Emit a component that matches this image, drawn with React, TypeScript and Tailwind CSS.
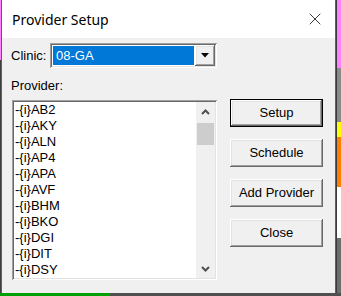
import { X } from "lucide-react";

const providers = ["AB2", "AKY", "ALN", "AP4", "APA", "AVF", "BHM", "BKO", "DGI", "DIT", "DSY"];

const WinButton = ({ label, isDefault = false }: { label: string; isDefault?: boolean }) => (
    <button
        className={
            isDefault
                ? "h-[28px] w-[93px] bg-[#f0f0f0] border border-black shadow-[inset_-1px_-1px_#696969,inset_1px_1px_#ffffff,inset_-2px_-2px_#a0a0a0,inset_2px_2px_#e3e3e3] text-[13px] text-black"
                : "h-[28px] w-[93px] bg-[#f0f0f0] shadow-[inset_-1px_-1px_#696969,inset_1px_1px_#ffffff,inset_-2px_-2px_#a0a0a0,inset_2px_2px_#e3e3e3] text-[13px] text-black"
        }
    >
        {label}
    </button>
);

export default function App() {
    return (
        <div className="w-[341px] h-[296px] flex flex-col overflow-hidden bg-[#4a4a4a] font-['Liberation_Sans',Arial,sans-serif]">
            <div className="flex h-[293px]">
                {/* app behind the dialog, left edge */}
                <div className="w-[1px] flex flex-col">
                    <div className="h-[60px] bg-[#ff80ff]" />
                    <div className="flex-1 bg-[#404040]" />
                </div>

                {/* dialog */}
                <div className="w-[335px] flex flex-col border-x border-[#5f5f5f] bg-[#f0f0f0]">
                    <div className="h-[38px] bg-white flex items-center justify-between pl-[10px] pr-[10px]">
                        <span className="text-[14px] text-black font-['Noto_Sans',sans-serif]">Provider Setup</span>
                        <X size={20} strokeWidth={1} className="text-[#111]" />
                    </div>

                    <div className="flex pl-[9px] pt-[5px]">
                        <div className="w-[206px] flex flex-col">
                            <div className="flex items-center h-[25px]">
                                <span className="text-[13px] text-black w-[39px]">Clinic:</span>
                                <div className="flex h-[25px] w-[167px] bg-white p-[2px] shadow-[inset_1px_1px_#a0a0a0,inset_-1px_-1px_#ffffff,inset_2px_2px_#696969,inset_-2px_-2px_#e3e3e3]">
                                    <div className="flex-1 m-[1px] bg-[#0078d7] text-white text-[13px] leading-[19px] pl-[3px]">08-GA</div>
                                    <div className="w-[20px] bg-[#f0f0f0] flex items-center justify-center shadow-[inset_-1px_-1px_#696969,inset_1px_1px_#ffffff,inset_-2px_-2px_#a0a0a0,inset_2px_2px_#e3e3e3]">
                                        <svg width="8" height="5" viewBox="0 0 8 5">
                                            <path d="M0 0H8L4 4.5Z" fill="#000" />
                                        </svg>
                                    </div>
                                </div>
                            </div>

                            <span className="mt-[10px] text-[13px] leading-[16px] text-black">Provider:</span>

                            <div className="mt-[6px] ml-[1px] w-[205px] h-[180px] flex bg-white p-[2px] shadow-[inset_1px_1px_#a0a0a0,inset_-1px_-1px_#ffffff,inset_2px_2px_#696969,inset_-2px_-2px_#e3e3e3]">
                                <div className="flex-1 flex flex-col pl-[1px] overflow-hidden">
                                    {providers.map(p => (
                                        <span key={p} className="text-[13px] leading-[16px] text-black whitespace-nowrap">-{"{i}"}{p}</span>
                                    ))}
                                </div>
                                <div className="w-[19px] bg-[#f0f0f0] flex flex-col">
                                    <div className="h-[19px] flex items-center justify-center">
                                        <svg width="9" height="6" viewBox="0 0 9 6">
                                            <path d="M1 5L4.5 1.5L8 5" stroke="#505050" strokeWidth="2" fill="none" />
                                        </svg>
                                    </div>
                                    <div className="mt-[2px] mx-[1px] h-[22px] bg-[#cdcdcd]" />
                                    <div className="flex-1" />
                                    <div className="h-[19px] flex items-center justify-center">
                                        <svg width="9" height="6" viewBox="0 0 9 6">
                                            <path d="M1 1L4.5 4.5L8 1" stroke="#505050" strokeWidth="2" fill="none" />
                                        </svg>
                                    </div>
                                </div>
                            </div>
                        </div>

                        <div className="ml-[13px] mt-[56px] flex flex-col gap-[12px]">
                            <WinButton label="Setup" isDefault />
                            <WinButton label="Schedule" />
                            <WinButton label="Add Provider" />
                            <WinButton label="Close" />
                        </div>
                    </div>
                </div>

                {/* app behind the dialog, right edge */}
                <div className="w-[5px] flex flex-col border-l border-[#3a3a3a]">
                    <div className="h-[68px] bg-[#ff80ff]" />
                    <div className="h-[54px] bg-[#8a8a8a]" />
                    <div className="h-[15px] bg-[#ffff00]" />
                    <div className="h-[50px] bg-[#ff8000]" />
                    <div className="h-[51px] bg-white" />
                    <div className="flex-1 bg-[#6d6d6d]" />
                </div>
            </div>
            <div className="flex h-[3px]">
                <div className="w-[110px] bg-[#00a000]" />
                <div className="flex-1 bg-[#505050]" />
            </div>
        </div>
    );
}
